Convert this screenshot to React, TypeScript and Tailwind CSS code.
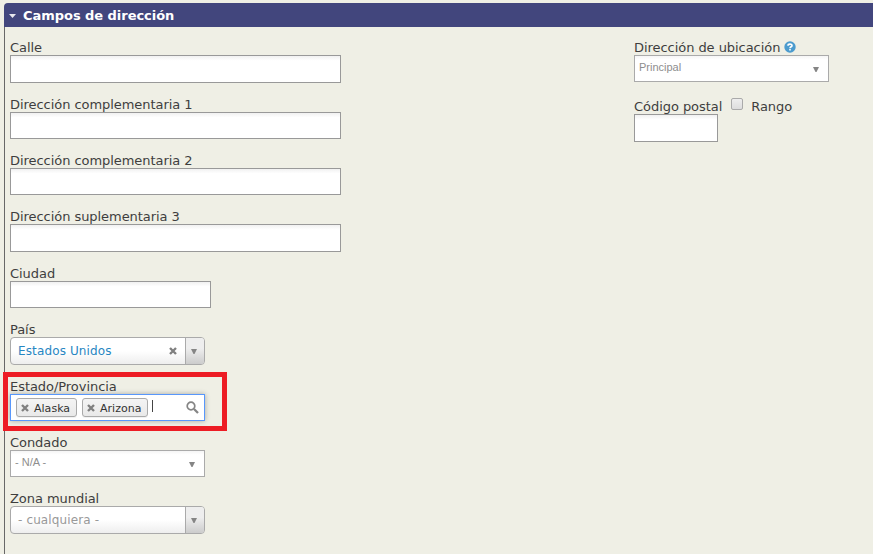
import type { ReactNode } from "react";

function Arrow({ className = "" }: { className?: string }) {
  return (
    <svg className={className} width="6" height="5" viewBox="0 0 6 5">
      <path d="M0 0h6L3.5 5h-1z" fill="#858585" />
    </svg>
  );
}

function Cross() {
  return (
    <svg className="shrink-0" width="8" height="8" viewBox="0 0 8 8">
      <path d="M1 1l6 6M7 1L1 7" stroke="#808080" strokeWidth="2.4" />
    </svg>
  );
}

function Field({ label, size, children }: { label: ReactNode; size: string; children: ReactNode }) {
  return (
    <div className={`shrink-0 ${size}`}>
      <div className="flex h-[17px] items-center whitespace-nowrap pt-[2px] leading-[17px]">{label}</div>
      {children}
    </div>
  );
}

function TextBox({ size }: { size: string }) {
  return (
    <input
      className={`block border border-[#999] bg-white bg-linear-to-b from-[#f1f1f1] to-white to-18% px-1 outline-none ${size}`}
    />
  );
}

function PlainSelect({ text }: { text: string }) {
  return (
    <div className="flex h-[27px] w-[195px] items-start justify-between border border-[#aaa] bg-white bg-linear-to-b from-[#f5f5f5] to-white to-15% pl-1 pr-[9px] font-['Liberation_Sans',Arial,sans-serif] text-[11px] tracking-normal text-[#8e8e8e]">
      <span className="pt-[4px] leading-[15px]">{text}</span>
      <Arrow className="mt-[11px]" />
    </div>
  );
}

function FancySelect({ text, color, clear }: { text: string; color: string; clear?: boolean }) {
  return (
    <div className="flex h-[28px] w-[195px] overflow-hidden rounded-[4px] border border-[#aaa] bg-linear-to-t from-[#eee] to-white to-50%">
      <div className={`flex flex-1 items-center justify-between pl-[7px] pr-[8px] text-[12px] tracking-[0.13px] ${color}`}>
        <span className="whitespace-nowrap">{text}</span>
        {clear && <Cross />}
      </div>
      <div className="flex w-[19px] items-center justify-center border-l border-[#aaa] bg-linear-to-t from-[#ccc] to-[#eee] to-60% pr-[2px]">
        <Arrow className="mt-[1px]" />
      </div>
    </div>
  );
}

function Tag({ text, size }: { text: string; size: string }) {
  return (
    <div
      className={`flex h-[19px] items-center gap-[5px] rounded-[3px] border border-[#aaa] bg-linear-to-b from-[#f4f4f4] to-[#e9e9e9] pl-[4px] text-[11px] leading-[13px] tracking-[0.02px] text-[#333] shadow-[0_1px_0_rgba(0,0,0,0.05)] ${size}`}
    >
      <Cross />
      <span className="pt-px">{text}</span>
    </div>
  );
}

export default function App() {
  return (
    <div className="relative h-[554px] w-[873px] overflow-hidden bg-[#efefe5] pl-[4px] pt-[3px] font-['DejaVu_Sans',Verdana,sans-serif] text-[13px] tracking-[-0.05px] text-[#3e3e3e]">
      <div className="flex h-[24px] items-center rounded-tl-[4px] bg-[#42467d] pl-[5px] text-white">
        <svg className="mt-px" width="7" height="4" viewBox="0 0 7 4">
          <path d="M0 0h7L3.5 4z" fill="#e8e8ee" />
        </svg>
        <span className="pl-[7px] pt-px text-[13px] font-bold tracking-[-0.04px]">Campos de dirección</span>
      </div>

      <div className="flex h-[527px] border-l border-[#686868] pl-[5px] pt-[11px]">
        <div className="flex w-[624px] flex-col">
          <Field label="Calle" size="h-[57px]">
            <TextBox size="h-[28px] w-[331px]" />
          </Field>
          <Field label="Dirección complementaria 1" size="h-[56px]">
            <TextBox size="h-[27px] w-[331px]" />
          </Field>
          <Field label="Dirección complementaria 2" size="h-[56px]">
            <TextBox size="h-[27px] w-[331px]" />
          </Field>
          <Field label="Dirección suplementaria 3" size="h-[57px]">
            <TextBox size="h-[28px] w-[331px]" />
          </Field>
          <Field label="Ciudad" size="h-[56px]">
            <TextBox size="h-[27px] w-[201px]" />
          </Field>
          <Field label="País" size="h-[57px]">
            <FancySelect text="Estados Unidos" color="text-[#2786c2]" clear />
          </Field>
          <Field label="Estado/Provincia" size="h-[56px]">
            <div className="flex h-[27px] w-[195px] items-center border border-[#5897fb] bg-white pl-[5px] pr-[5px] shadow-[0_0_5px_rgba(0,0,0,0.3)]">
              <Tag text="Alaska" size="w-[61px]" />
              <Tag text="Arizona" size="ml-[5px] w-[66px]" />
              <div className="mb-[3px] ml-[4px] h-[12px] w-px bg-[#444]" />
              <svg className="ml-auto" width="13" height="13" viewBox="0 0 13 13" fill="none" stroke="#858585">
                <circle cx="5" cy="5" r="3.8" strokeWidth="1.7" />
                <path d="M8 8l4 4" strokeWidth="2.3" />
              </svg>
            </div>
          </Field>
          <Field label="Condado" size="h-[56px]">
            <PlainSelect text="- N/A -" />
          </Field>
          <Field label="Zona mundial" size="h-[45px]">
            <FancySelect text="- cualquiera -" color="text-[#999]" />
          </Field>
        </div>

        <div className="flex flex-col">
          <Field
            size="h-[59px]"
            label={
              <>
                <span>Dirección de ubicación</span>
                <svg className="mb-px ml-[4px]" width="12" height="12" viewBox="0 0 12 12">
                  <circle cx="6" cy="6" r="5.7" fill="#4b9bce" />
                  <path
                    d="M4 4.7C4 2.7 8 2.6 8 4.7C8 5.8 6 5.8 6 7.2M6 8v1.5"
                    fill="none"
                    stroke="#fff"
                    strokeWidth="1.6"
                  />
                </svg>
              </>
            }
          >
            <PlainSelect text="Principal" />
          </Field>
          <Field
            size="h-[45px]"
            label={
              <>
                <span>Código postal</span>
                <span className="mb-[6px] ml-[9px] h-[12px] w-[12px] rounded-[2px] border border-[#aaa] bg-linear-to-b from-[#eee] to-[#ddd]" />
                <span className="ml-[8px]">Rango</span>
              </>
            }
          >
            <TextBox size="h-[28px] w-[84px]" />
          </Field>
        </div>
      </div>

      <div className="pointer-events-none absolute left-[3px] top-[372px] h-[59px] w-[224px] border-[5px] border-[#ed1c24]" />
    </div>
  );
}
